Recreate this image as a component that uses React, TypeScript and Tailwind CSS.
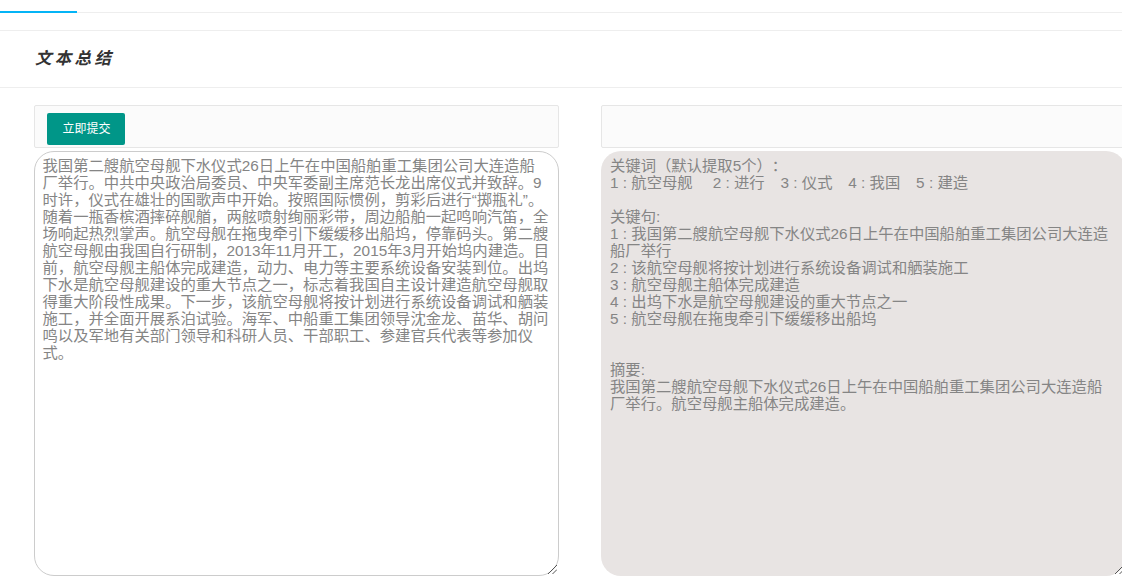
const sourceText = [
  '我国第二艘航空母舰下水仪式26日上午在中国船舶重工集团公司大连造船',
  '厂举行。中共中央政治局委员、中央军委副主席范长龙出席仪式并致辞。9',
  '时许，仪式在雄壮的国歌声中开始。按照国际惯例，剪彩后进行“掷瓶礼”。',
  '随着一瓶香槟酒摔碎舰艏，两舷喷射绚丽彩带，周边船舶一起鸣响汽笛，全',
  '场响起热烈掌声。航空母舰在拖曳牵引下缓缓移出船坞，停靠码头。第二艘',
  '航空母舰由我国自行研制，2013年11月开工，2015年3月开始坞内建造。目',
  '前，航空母舰主船体完成建造，动力、电力等主要系统设备安装到位。出坞',
  '下水是航空母舰建设的重大节点之一，标志着我国自主设计建造航空母舰取',
  '得重大阶段性成果。下一步，该航空母舰将按计划进行系统设备调试和舾装',
  '施工，并全面开展系泊试验。海军、中船重工集团领导沈金龙、苗华、胡问',
  '鸣以及军地有关部门领导和科研人员、干部职工、参建官兵代表等参加仪',
  '式。',
].join('\n');

const summaryText = [
  '关键词（默认提取5个）：',
  '1 : 航空母舰    \u20092 : 进行   \u20093 : 仪式   \u20094 : 我国   \u20095 : 建造',
  '',
  '关键句:',
  '1 : 我国第二艘航空母舰下水仪式26日上午在中国船舶重工集团公司大连造',
  '船厂举行',
  '2 : 该航空母舰将按计划进行系统设备调试和舾装施工',
  '3 : 航空母舰主船体完成建造',
  '4 : 出坞下水是航空母舰建设的重大节点之一',
  '5 : 航空母舰在拖曳牵引下缓缓移出船坞',
  '',
  '',
  '摘要:',
  '我国第二艘航空母舰下水仪式26日上午在中国船舶重工集团公司大连造船',
  '厂举行。航空母舰主船体完成建造。',
].join('\n');

function ResizeGrip() {
  return (
    <svg
      className="pointer-events-none absolute right-[2px] bottom-[2px] size-[9px]"
      viewBox="0 0 9 9"
      stroke="#555555"
      strokeWidth="1"
      fill="none"
    >
      <path d="M0 9 9 0M4.5 9 9 4.5" />
    </svg>
  );
}

export default function App() {
  return (
    <div
      lang="zh-CN"
      className="h-[579px] w-full overflow-hidden bg-white font-['Liberation_Sans','Noto_Sans_CJK_SC',sans-serif] [text-spacing-trim:space-all]"
    >
      <div className="flex h-[13px] items-end border-b border-[#eeeeee]">
        <div className="-mb-px h-[2px] w-[77px] bg-[#04b4f6]" />
      </div>
      <header className="mt-[17px] flex h-[58px] items-center border-y border-[#eeeeee] pb-[2px] pl-[35px]">
        <h1 className="text-[16.5px] leading-6 font-bold italic tracking-[3.3px] text-[#333333]">文本总结</h1>
      </header>
      <main className="mt-[17px] flex gap-[42px] pl-[34px]">
        <section className="w-[525px] shrink-0">
          <div className="h-[43px] rounded-[2px] border border-[#e6e6e6] bg-[#fbfbfb] pt-[7px] pl-3">
            <button className="block h-8 w-[78px] rounded-[2px] bg-[#009688] pl-px text-[12px] leading-8 text-white">
              立即提交
            </button>
          </div>
          <div className="relative mt-[3px]">
            <textarea
              spellCheck={false}
              defaultValue={sourceText}
              className="block h-[425px] w-full resize-none overflow-hidden rounded-[20px] border border-[#cccccc] bg-white pt-[5px] pl-[7.5px] text-[15.33px] leading-[17px] whitespace-pre text-[#858585] outline-none [text-spacing-trim:space-all]"
            />
            <ResizeGrip />
          </div>
        </section>
        <section className="w-[525px] shrink-0">
          <div className="h-[43px] rounded-[2px] border border-[#e6e6e6] bg-[#fbfbfb]" />
          <div className="relative mt-[3px]">
            <textarea
              readOnly
              value={summaryText}
              className="block h-[425px] w-full resize-none overflow-hidden rounded-[20px] bg-[#e8e4e3] pt-[6px] pl-[9px] text-[15.33px] leading-[17px] whitespace-pre text-[#858585] outline-none [text-spacing-trim:space-all]"
            />
            <ResizeGrip />
          </div>
        </section>
      </main>
    </div>
  );
}
